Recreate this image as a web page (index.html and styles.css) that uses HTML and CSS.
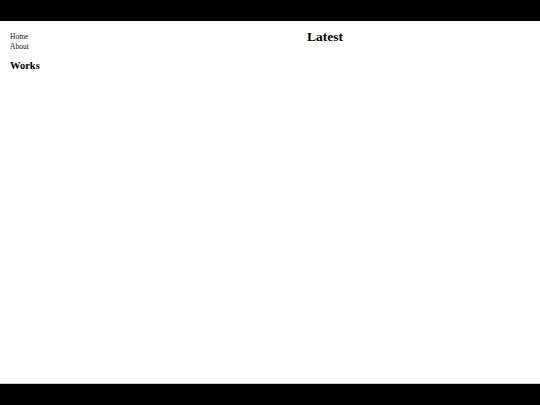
FILE: index.html
```html
<!DOCTYPE html>
<html>
<head>
<meta charset="utf-8">
<link rel="stylesheet" href="styles.css">
</head>
<body>
<div class="page">
  <header class="topbar"></header>
  <div class="content">
    <aside class="sidebar">
      <nav class="nav">
        <span class="nav-link">Home</span>
        <span class="nav-link">About</span>
      </nav>
      <h2 class="side-title">Works</h2>
    </aside>
    <main class="main">
      <h1 class="main-title">Latest</h1>
    </main>
  </div>
  <footer class="bottombar"></footer>
</div>
</body>
</html>
```
FILE: styles.css
```css
html, body {
  margin: 0;
  padding: 0;
  background: #fff;
}
body {
  font-family: "Liberation Serif", "Times New Roman", serif;
  color: #000;
}
.page {
  display: flex;
  flex-direction: column;
  height: 100vh;
}
.topbar {
  height: 21px;
  background: #000;
  flex: none;
}
.content {
  flex: 1;
  display: grid;
  grid-template-columns: 110px 1fr;
}
.sidebar {
  padding: 11px 0 0 10px;
}
.nav {
  display: flex;
  flex-direction: column;
}
.nav-link {
  font-size: 7.5px;
  line-height: 10px;
  color: #111;
  cursor: pointer;
}
.side-title {
  margin: 8px 0 0;
  font-size: 10.5px;
  line-height: 12px;
  font-weight: bold;
}
.main {
  padding-top: 8px;
}
.main-title {
  margin: 0;
  text-align: center;
  font-size: 13.5px;
  line-height: 16px;
  font-weight: bold;
}
.bottombar {
  height: 21px;
  background: #000;
  flex: none;
  border-top: 1px solid #ccc;
}
```
